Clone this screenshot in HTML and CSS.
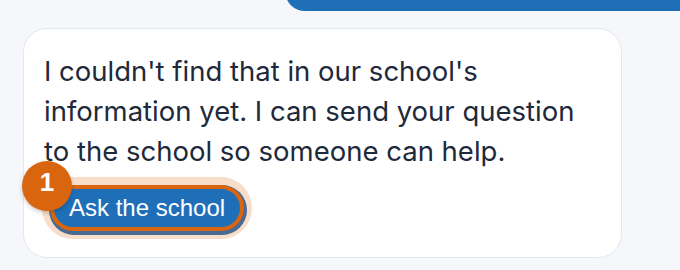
FILE: index.html
```html
<!DOCTYPE html>
<html lang="en">
<head>
  <meta charset="UTF-8">
  <title>School Assistant</title>
  <meta name="viewport" content="width=device-width, initial-scale=1.0">
  <link rel="stylesheet" href="styles.css">
</head>
<body>

<div class="chat">
  <div class="bubble-user"></div>

  <div class="bubble-bot">
    <p class="message">I couldn't find that in our school's information yet. I can send your question to the school so someone can help.</p>
    <div class="action">
      <span class="badge">1</span>
      <button class="ask-btn">Ask the school</button>
    </div>
  </div>
</div>

</body>
</html>
```

FILE: styles.css
```css
* {
  box-sizing: border-box;
}

body {
  margin: 0;
  padding: 0;
  background: #f6f7fb;
  font-family: 'Inter', 'Noto Sans', sans-serif;
  color: #1e293b;
  overflow: hidden;
}

.chat {
  display: flex;
  flex-direction: column;
  align-items: flex-start;
}

.bubble-user {
  align-self: stretch;
  height: 60px;
  margin-top: -49px;
  margin-left: 285px;
  background: #1f6fb8;
  border-radius: 0 0 0 20px;
}

.bubble-bot {
  width: 599px;
  margin: 17px 0 0 23px;
  padding: 22px 20px 26px 20px;
  background: white;
  border: 1px solid #e3e7ee;
  border-radius: 24px;
}

.message {
  margin: 0;
  max-width: 550px;
  font-size: 27.5px;
  line-height: 40px;
}

.action {
  position: relative;
  display: inline-block;
  margin: 14px 0 0 6px;
}

.ask-btn {
  display: block;
  height: 46px;
  padding: 0 15px;
  background: #1f6fb8;
  color: white;
  border: 4px solid #d9650f;
  border-radius: 999px;
  font-family: 'Liberation Sans', Arial, sans-serif;
  font-size: 24px;
  line-height: 28px;
  box-shadow: 1px 2px 0 2px #4a6a94, 0 0 0 8px rgba(217, 101, 15, 0.22);
  cursor: pointer;
}

.badge {
  position: absolute;
  left: -28px;
  top: -24px;
  z-index: 1;
  width: 50px;
  height: 50px;
  border-radius: 50%;
  background: #d9650f;
  color: white;
  font-family: 'Liberation Sans', Arial, sans-serif;
  font-weight: 700;
  font-size: 26px;
  line-height: 42px;
  text-align: center;
  box-shadow: 0 2px 4px rgba(0, 0, 0, 0.2);
}
```
